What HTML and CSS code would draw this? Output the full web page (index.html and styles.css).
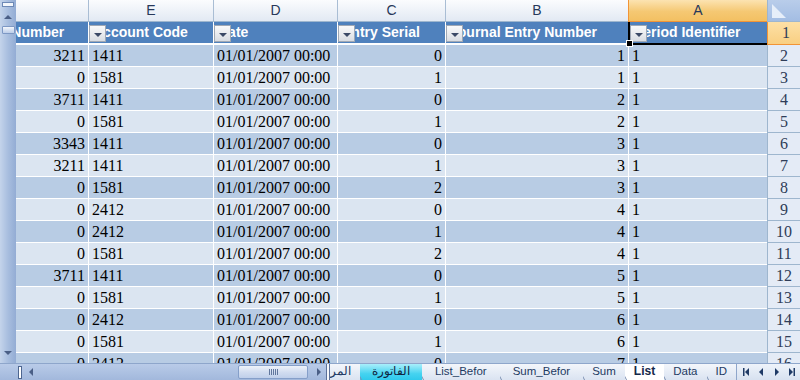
FILE: index.html
```html
<!DOCTYPE html>
<html lang="en">
<head>
  <meta charset="UTF-8">
  <title>List - Excel</title>
  <link rel="stylesheet" href="styles.css">
</head>
<body>
  <div class="excel">
    <div class="main">
      <div class="vscroll">
        <div class="vsplit"></div>
        <svg class="varrow up" width="10" height="6" viewBox="0 0 10 6"><path d="M1 5 L5 1 L9 5 Z" fill="#4a5f86"/></svg>
        <div class="vthumb"></div>
        <div class="vspace"></div>
        <svg class="varrow down" width="10" height="6" viewBox="0 0 10 6"><path d="M1 1 L9 1 L5 5 Z" fill="#4a5f86"/></svg>
      </div>

      <div class="sheet">
        <div class="row colhead">
          <div class="c corner"></div>
          <div class="c sel">A</div>
          <div class="c">B</div>
          <div class="c">C</div>
          <div class="c">D</div>
          <div class="c">E</div>
          <div class="c">F</div>
        </div>

        <div class="row thead">
          <div class="c rh rsel">1</div>
          <div class="c active"><span class="dd"></span>Period Identifier<span class="handle"></span></div>
          <div class="c"><span class="dd"></span>Journal Entry Number</div>
          <div class="c"><span class="dd"></span>Entry Serial</div>
          <div class="c"><span class="dd"></span>Date</div>
          <div class="c"><span class="dd"></span>Account Code</div>
          <div class="c"><span class="dd"></span>Document Number</div>
        </div>

        <div class="row dark">
          <div class="c rh">2</div><div class="c">1</div><div class="c n">1</div><div class="c n">0</div>
          <div class="c">01/01/2007 00:00</div><div class="c">1411</div><div class="c n">3211</div>
        </div>
        <div class="row light">
          <div class="c rh">3</div><div class="c">1</div><div class="c n">1</div><div class="c n">1</div>
          <div class="c">01/01/2007 00:00</div><div class="c">1581</div><div class="c n">0</div>
        </div>
        <div class="row dark">
          <div class="c rh">4</div><div class="c">1</div><div class="c n">2</div><div class="c n">0</div>
          <div class="c">01/01/2007 00:00</div><div class="c">1411</div><div class="c n">3711</div>
        </div>
        <div class="row light">
          <div class="c rh">5</div><div class="c">1</div><div class="c n">2</div><div class="c n">1</div>
          <div class="c">01/01/2007 00:00</div><div class="c">1581</div><div class="c n">0</div>
        </div>
        <div class="row dark">
          <div class="c rh">6</div><div class="c">1</div><div class="c n">3</div><div class="c n">0</div>
          <div class="c">01/01/2007 00:00</div><div class="c">1411</div><div class="c n">3343</div>
        </div>
        <div class="row light">
          <div class="c rh">7</div><div class="c">1</div><div class="c n">3</div><div class="c n">1</div>
          <div class="c">01/01/2007 00:00</div><div class="c">1411</div><div class="c n">3211</div>
        </div>
        <div class="row dark">
          <div class="c rh">8</div><div class="c">1</div><div class="c n">3</div><div class="c n">2</div>
          <div class="c">01/01/2007 00:00</div><div class="c">1581</div><div class="c n">0</div>
        </div>
        <div class="row light">
          <div class="c rh">9</div><div class="c">1</div><div class="c n">4</div><div class="c n">0</div>
          <div class="c">01/01/2007 00:00</div><div class="c">2412</div><div class="c n">0</div>
        </div>
        <div class="row dark">
          <div class="c rh">10</div><div class="c">1</div><div class="c n">4</div><div class="c n">1</div>
          <div class="c">01/01/2007 00:00</div><div class="c">2412</div><div class="c n">0</div>
        </div>
        <div class="row light">
          <div class="c rh">11</div><div class="c">1</div><div class="c n">4</div><div class="c n">2</div>
          <div class="c">01/01/2007 00:00</div><div class="c">1581</div><div class="c n">0</div>
        </div>
        <div class="row dark">
          <div class="c rh">12</div><div class="c">1</div><div class="c n">5</div><div class="c n">0</div>
          <div class="c">01/01/2007 00:00</div><div class="c">1411</div><div class="c n">3711</div>
        </div>
        <div class="row light">
          <div class="c rh">13</div><div class="c">1</div><div class="c n">5</div><div class="c n">1</div>
          <div class="c">01/01/2007 00:00</div><div class="c">1581</div><div class="c n">0</div>
        </div>
        <div class="row dark">
          <div class="c rh">14</div><div class="c">1</div><div class="c n">6</div><div class="c n">0</div>
          <div class="c">01/01/2007 00:00</div><div class="c">2412</div><div class="c n">0</div>
        </div>
        <div class="row light">
          <div class="c rh">15</div><div class="c">1</div><div class="c n">6</div><div class="c n">1</div>
          <div class="c">01/01/2007 00:00</div><div class="c">1581</div><div class="c n">0</div>
        </div>
        <div class="row dark">
          <div class="c rh">16</div><div class="c">1</div><div class="c n">7</div><div class="c n">0</div>
          <div class="c">01/01/2007 00:00</div><div class="c">2412</div><div class="c n">0</div>
        </div>
      </div>
    </div>

    <div class="bottom">
      <div class="hscroll">
        <div class="hsplit"></div>
        <svg class="harrow" width="6" height="10" viewBox="0 0 6 10"><path d="M5 1 L1 5 L5 9 Z" fill="#4a5f86"/></svg>
        <div class="htrack">
          <div class="hthumb"><span class="grip"></span></div>
        </div>
        <svg class="harrow" width="6" height="10" viewBox="0 0 6 10"><path d="M1 1 L5 5 L1 9 Z" fill="#4a5f86"/></svg>
      </div>
      <div class="tabsplit"></div>
      <div class="tabs">
        <div class="tab">ID</div>
        <div class="tab">Data</div>
        <div class="tab current">List</div>
        <div class="tab">Sum</div>
        <div class="tab wide">Sum_Befor</div>
        <div class="tab wide">List_Befor</div>
        <div class="tab cyan">الفاتورة</div>
        <div class="tab">المراجعة</div>
      </div>
      <div class="nav">
        <svg width="60" height="10" viewBox="0 0 60 10">
          <rect x="4" y="1" width="1.5" height="8" fill="#1f3a66"/>
          <path d="M10 1 L6 5 L10 9 Z" fill="#1f3a66"/>
          <path d="M24 1 L20 5 L24 9 Z" fill="#1f3a66"/>
          <path d="M36 1 L40 5 L36 9 Z" fill="#1f3a66"/>
          <path d="M50 1 L54 5 L50 9 Z" fill="#1f3a66"/>
          <rect x="54.5" y="1" width="1.5" height="8" fill="#1f3a66"/>
        </svg>
      </div>
    </div>
  </div>
</body>
</html>
```

FILE: styles.css
```css
body {
  margin: 0;
  font-family: "Liberation Sans", Arial, sans-serif;
}
.excel {
  width: 800px;
  height: 380px;
  overflow: hidden;
  background: #dbe5f1;
}
.main {
  display: flex;
  height: 363px;
}

/* vertical scroll bar */
.vscroll {
  width: 16px;
  flex: none;
  display: flex;
  flex-direction: column;
  align-items: center;
  background: linear-gradient(to right, #c4d4eb, #a8bedf 50%, #93acd4);
}
.vsplit {
  width: 10px;
  height: 3px;
  margin-top: 2px;
  background: #f2f6fb;
  border: 1px solid #6d89b6;
}
.varrow.up {
  margin-top: 7px;
}
.vthumb {
  width: 11px;
  height: 6px;
  margin-top: 6px;
  border: 1px solid #7d98c4;
  border-radius: 1px;
  background: linear-gradient(#f4f7fc, #d6e1f2 50%, #bccde9);
}
.vspace {
  flex: 1;
}
.varrow.down {
  margin-bottom: 7px;
}

/* sheet grid, right to left */
.sheet {
  width: 784px;
  overflow: hidden;
  direction: rtl;
  background: #fff;
}
.row {
  display: grid;
  grid-template-columns: 33px 139px 183px 108px 124px 125px 154px;
}
.c {
  direction: ltr;
  border-left: 1px solid #fff;
  border-bottom: 1px solid #fff;
  padding: 0 3px;
  font: 16px/21px "Liberation Serif", "Times New Roman", serif;
  color: #000;
  white-space: nowrap;
  overflow: hidden;
}
.n {
  text-align: right;
}
.dark .c {
  background: #b8cce4;
}
.light .c {
  background: #dbe5f1;
}
.row .rh {
  background: #e4ebf6;
  border-left-color: #9eb6ce;
  border-bottom-color: #9eb6ce;
  text-align: center;
  color: #2f3d58;
  padding: 0;
}

/* column letters */
.colhead .c {
  background: linear-gradient(#fbfcfe, #e2e9f3);
  border-left-color: #a9bdd4;
  border-bottom-color: #9eb6ce;
  text-align: center;
  font: 14px/21px "Liberation Sans", Arial, sans-serif;
  color: #27385a;
}
.colhead .sel {
  background: linear-gradient(#fce3b1, #f5c873 55%, #f3c062);
  border-left-color: #f29436;
  border-bottom-color: #f29436;
}
.colhead .corner {
  position: relative;
  background: linear-gradient(#b9cdea, #a3bde3);
  border-left-color: #9eb6ce;
}
.colhead .corner::after {
  content: "";
  position: absolute;
  left: 4px;
  top: 4px;
  width: 14px;
  height: 14px;
  background: #e6eef9;
  clip-path: polygon(0 0, 100% 100%, 0 100%);
}

/* table header row */
.thead .c {
  position: relative;
  overflow: visible;
  background: #4f81bd;
  color: #fff;
  font: bold 14px/21px "Liberation Sans", Arial, sans-serif;
  border-bottom: 2px solid #fff;
  padding-left: 4px;
}
.thead .rsel {
  background: linear-gradient(#fde0a6, #f9cf82);
  border-left-color: #f29436;
  border-bottom: 1px solid #f29436;
  font: 16px/22px "Liberation Serif", "Times New Roman", serif;
  color: #2f3d58;
}
.thead .active {
  border-left: 2px solid #000;
  border-bottom: 2px solid #000;
}
.dd {
  position: absolute;
  left: 0;
  top: 3px;
  width: 15px;
  height: 15px;
  border: 1px solid #a0a8b4;
  background: linear-gradient(#fafafa, #d9dde3);
}
.dd::after {
  content: "";
  position: absolute;
  left: 4px;
  top: 7px;
  border-left: 4px solid transparent;
  border-right: 4px solid transparent;
  border-top: 4px solid #3c4a66;
}
.handle {
  position: absolute;
  left: -4px;
  bottom: -4px;
  width: 5px;
  height: 5px;
  background: #000;
  border: 1px solid #fff;
  z-index: 2;
}

/* bottom strip */
.bottom {
  display: flex;
  height: 17px;
  border-top: 1px solid #8ea6cb;
  box-sizing: border-box;
}
.hscroll {
  width: 326px;
  flex: none;
  display: flex;
  align-items: center;
  padding-left: 18px;
  box-sizing: border-box;
  background: linear-gradient(#b9cbe8, #a2b8dc);
}
.hsplit {
  width: 2px;
  height: 11px;
  background: #fff;
  border: 1px solid #4d6690;
}
.harrow {
  flex: none;
  margin: 0 4px 0 6px;
}
.htrack {
  flex: 1;
  display: flex;
  justify-content: flex-end;
  padding-right: 2px;
}
.hthumb {
  width: 68px;
  height: 12px;
  border: 1px solid #859fc9;
  border-radius: 2px;
  background: linear-gradient(#eef3fa, #d2ddf0 50%, #bfcfea);
  display: flex;
  align-items: center;
  justify-content: center;
}
.grip {
  width: 9px;
  height: 6px;
  background: repeating-linear-gradient(to right, #61779d 0 1px, transparent 1px 2px);
}
.tabsplit {
  width: 4px;
  flex: none;
  background: #f4f7fb;
  border-left: 1px solid #5a7099;
  border-right: 1px solid #5a7099;
  box-sizing: border-box;
}
.tabs {
  width: 406px;
  flex: none;
  display: flex;
  direction: rtl;
  overflow: hidden;
  background: #dfe8f5;
}
.tab {
  flex: none;
  position: relative;
  padding: 0 9px;
  font: 11.5px/15px "Liberation Sans", Arial, sans-serif;
  color: #1e3a62;
  background: linear-gradient(#f3f6fb, #dae3f1);
}
.tab.wide {
  padding: 0 13px;
}
.tab::after {
  content: "";
  position: absolute;
  left: -3px;
  top: 0;
  bottom: 0;
  width: 1px;
  background: #7f92b4;
  transform: skewX(27deg);
}
.tab.current {
  background: #fff;
  font-weight: bold;
  font-size: 12px;
  color: #14284a;
}
.tab.cyan {
  background: linear-gradient(#a9eefb, #46d3f0 60%, #2fc9ec);
  color: #10253f;
  padding: 0 12px;
}
.nav {
  flex: 1;
  display: flex;
  align-items: center;
  justify-content: center;
  border-left: 1px solid #8ea6cb;
  background: linear-gradient(#eef3fa, #d7e1f0);
}
```
